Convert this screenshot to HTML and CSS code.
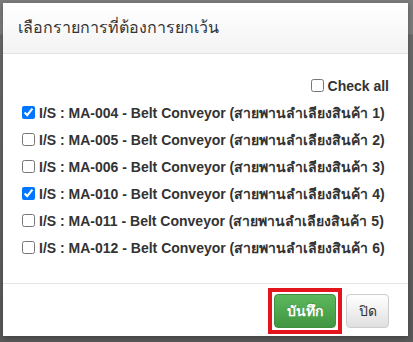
FILE: index.html
```html
<!DOCTYPE html>
<html lang="th">
  <head>
    <meta charset="utf-8" />
    <title>เลือกรายการที่ต้องการยกเว้น</title>
    <link rel="stylesheet" href="styles.css">
  </head>
  <body>
    <!-- Exception select modal -->
    <div class="page-backdrop">
      <div class="modal">
        <div class="modal-header">
          <h4 class="modal-title">เลือกรายการที่ต้องการยกเว้น</h4>
        </div>
        <div class="modal-body">
          <div class="check-all">
            <label><input type="checkbox" id="checkAll" /> Check all</label>
          </div>
          <div class="item-row">
            <label><input type="checkbox" checked /> I/S : MA-004 - Belt Conveyor (สายพานลำเลียงสินค้า 1)</label>
          </div>
          <div class="item-row">
            <label><input type="checkbox" /> I/S : MA-005 - Belt Conveyor (สายพานลำเลียงสินค้า 2)</label>
          </div>
          <div class="item-row">
            <label><input type="checkbox" /> I/S : MA-006 - Belt Conveyor (สายพานลำเลียงสินค้า 3)</label>
          </div>
          <div class="item-row">
            <label><input type="checkbox" checked /> I/S : MA-010 - Belt Conveyor (สายพานลำเลียงสินค้า 4)</label>
          </div>
          <div class="item-row">
            <label><input type="checkbox" /> I/S : MA-011 - Belt Conveyor (สายพานลำเลียงสินค้า 5)</label>
          </div>
          <div class="item-row">
            <label><input type="checkbox" /> I/S : MA-012 - Belt Conveyor (สายพานลำเลียงสินค้า 6)</label>
          </div>
        </div>
        <div class="modal-footer">
          <span class="highlight">
            <button class="btn btn-success">บันทึก</button>
          </span>
          <button class="btn btn-default">ปิด</button>
        </div>
      </div>
    </div>
  </body>
</html>
```

FILE: styles.css
```css
* {
  margin: 0;
  padding: 0;
  box-sizing: border-box;
}

body {
  font-family: 'Liberation Sans', Tahoma, sans-serif;
  background: #7a7a7a;
  color: #333;
  width: 413px;
  height: 342px;
  overflow: hidden;
}

.page-backdrop {
  height: 342px;
  padding: 3px 5px 6px 3px;
  background: linear-gradient(to bottom, #7c7c7c 0, #7c7c7c 34px, #6a6a6a 35px, #5a5a5a 100%);
}

.modal {
  background: #fff;
  height: 333px;
  display: flex;
  flex-direction: column;
  box-shadow: 0 2px 6px rgba(0, 0, 0, 0.3);
}

.modal-header {
  height: 51px;
  padding: 0 15px;
  display: flex;
  align-items: center;
  background: linear-gradient(to bottom, #ffffff 0%, #f3f3f3 100%);
  border-bottom: 1px solid #e2e2e2;
}

.modal-title {
  font-size: 16px;
  font-weight: 400;
  color: #333;
  line-height: 20px;
}

.modal-body {
  flex: 1;
  padding: 18px 19px 0 15px;
}

.check-all,
.item-row {
  height: 27px;
  display: flex;
  align-items: center;
}

.check-all {
  justify-content: flex-end;
}

label {
  font-size: 14px;
  font-weight: 700;
  color: #333;
  white-space: nowrap;
  display: flex;
  align-items: center;
}

label input {
  width: 13px;
  height: 13px;
  margin: 0 4px;
}

.modal-footer {
  border-top: 1px solid #e5e5e5;
  height: 53px;
  padding: 4px 19px 0 0;
  display: flex;
  justify-content: flex-end;
  align-items: flex-start;
  gap: 4px;
}

.highlight {
  display: block;
  border: 4px solid #e3141c;
  padding: 2px;
}

.btn {
  display: block;
  height: 34px;
  font-family: Tahoma, 'Liberation Sans', sans-serif;
  font-size: 14px;
  border-radius: 4px;
  cursor: pointer;
}

.btn-success {
  width: 62px;
  color: #fff;
  font-weight: 700;
  background: linear-gradient(to bottom, #5cb85c 0%, #419641 100%);
  border: 1px solid #3e8f3e;
  text-shadow: 0 -1px 0 rgba(0, 0, 0, 0.2);
}

.btn-default {
  width: 43px;
  margin-top: 6px;
  color: #333;
  background: linear-gradient(to bottom, #ffffff 0%, #e0e0e0 100%);
  border: 1px solid #ccc;
}
```
